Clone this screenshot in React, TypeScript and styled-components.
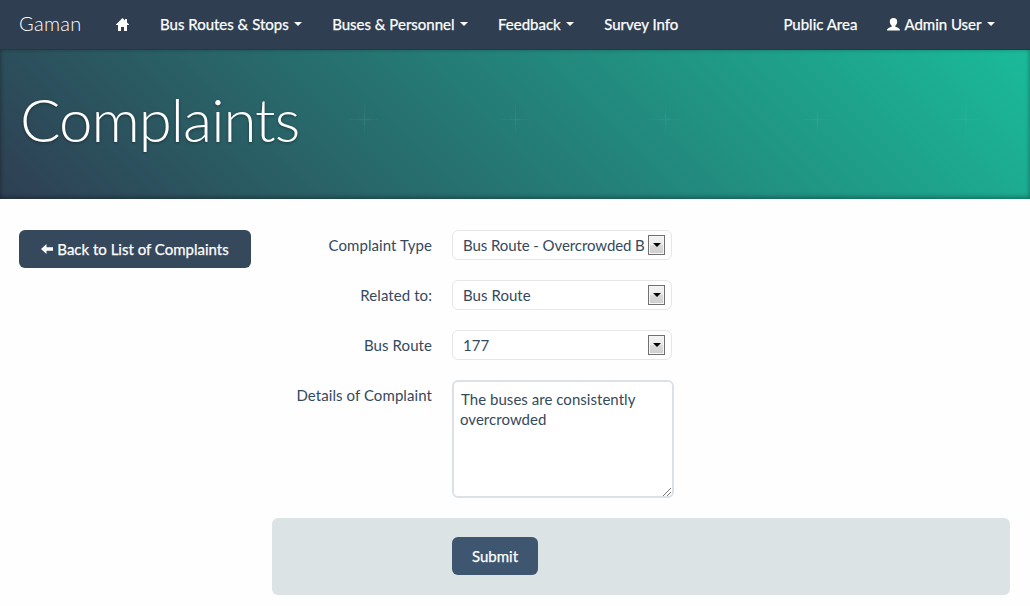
import React from "react";
import styled, { createGlobalStyle, css } from "styled-components";

const GlobalStyle = createGlobalStyle`
  * { box-sizing: border-box; }
  body {
    margin: 0;
    background: #fefefe;
    color: #34495e;
    font-family: Lato, "Liberation Sans", sans-serif;
    font-size: 15px;
    line-height: 20px;
    overflow: hidden;
  }
`;

const Navbar = styled.nav`
  display: flex;
  height: 50px;
  padding: 0 19px;
  background: #2f3e50;
  border-bottom: 1px solid #2a3546;
  color: #fff;
`;

const Brand = styled.a`
  width: 82px;
  padding-top: 13px;
  font-size: 20px;
  font-weight: 300;
  letter-spacing: 0.3px;
`;

const NavItem = styled.a<{ $end?: boolean; $last?: boolean }>`
  display: flex;
  align-items: center;
  height: 48px;
  padding: 0 15px;
  white-space: nowrap;
  font-weight: 400;
  -webkit-text-stroke: 0.25px #fff;
  ${(p) => p.$end && css`margin-left: auto;`}
  ${(p) => p.$last && css`padding-right: 16px;`}
`;

const Caret = styled.span`
  margin: 0 0 1px 5.5px;
  border: 4px solid transparent;
  border-top-color: #fff;
  border-bottom: 0;
`;

const Icon = styled.svg<{ $gap?: number }>`
  display: block;
  flex: none;
  margin-right: ${(p) => p.$gap ?? 0}px;
  fill: currentColor;
`;

const Banner = styled.header`
  position: relative;
  height: 149px;
  padding: 33px 20px 0;
  background: linear-gradient(45deg, #2f3f53 0%, #1abb9a 100%);
  box-shadow: inset 0 -2px 5px rgba(0, 0, 0, 0.28), inset 0 0 4px rgba(0, 0, 0, 0.15);
`;

const Sparkles = styled.svg`
  position: absolute;
  inset: 0;
`;

const Title = styled.h1`
  position: relative;
  margin: 0;
  color: #fff;
  font-size: 60px;
  line-height: 72px;
  font-weight: 300;
  letter-spacing: -1px;
  text-shadow: 0 1px 3px rgba(0, 0, 0, 0.4);
`;

const Content = styled.main`
  display: grid;
  grid-template-columns: 232px 738px;
  column-gap: 21px;
  align-items: start;
  padding: 31px 20px 0 19px;
`;

const Button = styled.button<{ $light?: boolean }>`
  display: flex;
  align-items: center;
  justify-content: center;
  height: 38px;
  padding: 0 20px;
  border: 0;
  border-radius: 6px;
  background: ${(p) => (p.$light ? "#3e566f" : "#35485c")};
  color: #fff;
  font: inherit;
  white-space: nowrap;
  -webkit-text-stroke: 0.25px #fff;
`;

const Form = styled.form`
  display: flex;
  flex-direction: column;
`;

const Row = styled.div`
  display: grid;
  grid-template-columns: 160px 222px;
  column-gap: 20px;
  align-items: start;
  margin-bottom: 20px;
`;

const Label = styled.label`
  padding-top: 5px;
  text-align: right;
  letter-spacing: 0.08px;
`;

const SelectBox = styled.div`
  display: flex;
  align-items: center;
  justify-content: space-between;
  width: 220px;
  height: 30px;
  padding: 0 6px 0 10px;
  border: 1px solid #e5e6e7;
  border-radius: 6px;
  background: #fff;
`;

const SelectValue = styled.span<{ $tight?: boolean }>`
  white-space: nowrap;
  letter-spacing: ${(p) => (p.$tight ? "-0.08px" : "0.05px")};
`;

const SelectArrow = styled.span`
  display: flex;
  align-items: center;
  justify-content: center;
  flex: none;
  width: 17px;
  height: 20px;
  border: 1px solid #707070;
  background: linear-gradient(#f3f3f3 0%, #ebebeb 48%, #dadada 52%, #cdcdcd 100%);
  box-shadow: inset 0 0 0 1px #f5f5f5;
  &::after {
    content: "";
    border: 4px solid transparent;
    border-top-color: #000;
    border-bottom: 0;
  }
`;

const DetailsFrame = styled.div`
  position: relative;
  height: 118px;
`;

const Details = styled.textarea`
  display: block;
  width: 222px;
  height: 118px;
  padding: 7px 6px;
  border: 2px solid #dce1e5;
  border-radius: 6px;
  outline: 0;
  resize: none;
  background: #fff;
  color: #34495e;
  font: inherit;
  text-indent: 1px;
  letter-spacing: 0.04px;
`;

const Grip = styled.svg`
  position: absolute;
  right: 3px;
  bottom: 2px;
`;

const Actions = styled.div`
  height: 77px;
  padding: 19px 0 0 180px;
  border-radius: 6px;
  background: #dbe3e4;
  display: flex;
  align-items: flex-start;
`;

const sparkX = [364, 515, 665, 817, 965];

const fields = [
  { label: "Complaint Type", value: "Bus Route - Overcrowded B", tight: true },
  { label: "Related to:", value: "Bus Route" },
  { label: "Bus Route", value: "177" },
];

export default function App() {
  return (
    <>
      <GlobalStyle />
      <Navbar>
        <Brand>Gaman</Brand>
        <NavItem>
          <Icon $gap={1} width="13" height="13" viewBox="0 0 13 13">
            <path d="M6.500 0 9 2.500V1h2v3.500l2 2V7h-2v6H8V9H5v4H2V7H0v-.5z" />
          </Icon>
        </NavItem>
        <NavItem>Bus Routes &amp; Stops<Caret /></NavItem>
        <NavItem>Buses &amp; Personnel<Caret /></NavItem>
        <NavItem>Feedback<Caret /></NavItem>
        <NavItem>Survey Info</NavItem>
        <NavItem $end>Public Area</NavItem>
        <NavItem $last>
          <Icon $gap={4} width="13" height="13" viewBox="0 0 13 13">
            <path d="M6.500 0C9 0 10.200 1.400 10.200 3.500c0 2-.9 3.400-1.900 4.200v1c1.700.8 4.700 1.200 4.700 3.800H0C0 9.900 3 9.500 4.700 8.700v-1c-1-.8-1.900-2.200-1.900-4.200C2.800 1.400 4 0 6.500 0z" />
          </Icon>
          Admin User<Caret />
        </NavItem>
      </Navbar>
      <Banner>
        <Sparkles width="1030" height="149" stroke="#7fe0cd" strokeOpacity="0.05">
          {sparkX.map((x) => (
            <React.Fragment key={x}>
              <path d={`M${x - 14} 69.500h28M${x + 0.5} 55v28`} />
              <path d={`M${x - 5} 69.500h11M${x + 0.5} 64v11`} strokeWidth="2" />
            </React.Fragment>
          ))}
        </Sparkles>
        <Title>Complaints</Title>
      </Banner>
      <Content>
        <Button type="button">
          <Icon $gap={4} width="12" height="10" viewBox="0 0 12 10">
            <path d="M0 5 5.500 0v3.200H12v3.600H5.500V10z" />
          </Icon>
          Back to List of Complaints
        </Button>
        <Form>
          {fields.map((f) => (
            <Row key={f.label}>
              <Label>{f.label}</Label>
              <SelectBox>
                <SelectValue $tight={f.tight}>{f.value}</SelectValue>
                <SelectArrow />
              </SelectBox>
            </Row>
          ))}
          <Row>
            <Label>Details of Complaint</Label>
            <DetailsFrame>
              <Details readOnly value="The buses are consistently overcrowded" />
              <Grip width="8" height="8" viewBox="0 0 8 8" stroke="#777" strokeWidth="1">
                <path d="M0 8 8 0M4 8l4-4" />
              </Grip>
            </DetailsFrame>
          </Row>
          <Actions>
            <Button type="button" $light>Submit</Button>
          </Actions>
        </Form>
      </Content>
    </>
  );
}
